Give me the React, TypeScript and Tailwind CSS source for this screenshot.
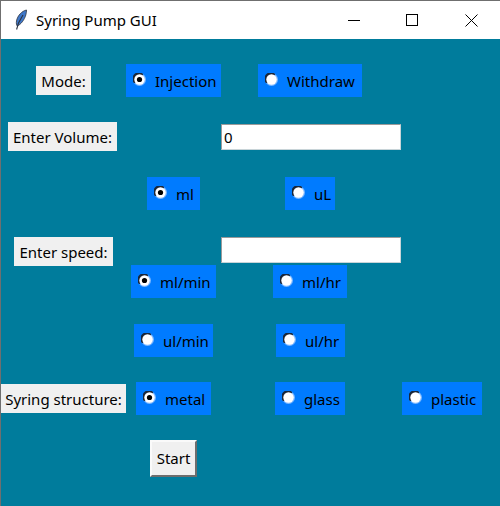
function Label({ text, className }: { text: string; className: string }) {
  return (
    <div className={`flex h-[29px] items-center justify-center bg-[#f0f0f0] text-black ${className}`}>
      <span className="translate-y-[1px]">{text}</span>
    </div>
  );
}

function Radio({ text, checked, className }: { text: string; checked?: boolean; className: string }) {
  return (
    <div className={`flex h-[33px] shrink-0 items-center bg-[#007bff] pl-[7px] text-black ${className}`}>
      <svg width="13" height="13" viewBox="0 0 13 13" className="mb-[2px] mr-[9px] shrink-0">
        <circle cx="6.5" cy="6.5" r="6.5" fill="#7db8ff" />
        <path d="M1.2 10.3A6.4 6.4 0 0 1 10.3 1.2L6.5 6.5Z" fill="#1a2638" />
        <circle cx="6.5" cy="6.5" r="5.2" fill="#ffffff" />
        {checked && <circle cx="6.5" cy="6.5" r="2.6" fill="#000000" />}
      </svg>
      <span className="translate-y-[1px] whitespace-nowrap">{text}</span>
    </div>
  );
}

function Field({ value, className }: { value: string; className: string }) {
  return (
    <input
      readOnly
      value={value}
      className={`h-[26px] w-[180px] border border-[#c8d4d8] border-t-[#9a9a9a] border-l-[#9a9a9a] bg-white px-[2px] text-black outline-none ${className}`}
    />
  );
}

export default function App() {
  return (
    <div className="flex h-[506px] w-[500px] flex-col overflow-hidden border-l border-[#6f6f6f] font-['Noto_Sans',sans-serif] text-[15px]">
      <div className="flex h-[39px] shrink-0 items-center border-t border-[#6f6f6f] bg-white text-black">
        <svg width="14" height="22" viewBox="0 0 14 22" className="ml-[13px] mr-[8px]">
          <path d="M12.5 1C8 2 3.5 6.5 2.5 12c-.4 2.5 0 4 .8 5 3.5-1.5 7-6 8.5-11 .4-2 .8-3.8.7-5Z" fill="#3f78c9" stroke="#39414f" strokeWidth="0.9" />
          <path d="M9 6 4.5 14 2.6 20.5" fill="none" stroke="#2b3240" strokeWidth="1.1" />
        </svg>
        <span>Syring Pump GUI</span>
        <div className="ml-auto flex items-center pr-[22px]">
          <svg width="12" height="12" viewBox="0 0 12 12" className="mr-[46px]">
            <path d="M0 6.5h12" stroke="#000" strokeWidth="1" />
          </svg>
          <svg width="12" height="12" viewBox="0 0 12 12" className="mr-[47px]">
            <rect x="0.5" y="0.5" width="11" height="11" fill="none" stroke="#000" strokeWidth="1" />
          </svg>
          <svg width="13" height="13" viewBox="0 0 13 13">
            <path d="M.5.5l12 12M12.5.5l-12 12" stroke="#000" strokeWidth="1" />
          </svg>
        </div>
      </div>
      <div className="flex flex-1 flex-col bg-[#007c9c] pt-[25px]">
        <div className="flex h-[33px] items-center">
          <Label text="Mode:" className="ml-[35px] w-[55px]" />
          <Radio text="Injection" checked className="ml-[35px] w-[95px]" />
          <Radio text="Withdraw" className="ml-[37px] w-[104px]" />
        </div>
        <div className="mt-[25px] flex h-[29px] items-center">
          <Label text="Enter Volume:" className="ml-[7px] w-[109px]" />
          <Field value="0" className="ml-[104px]" />
        </div>
        <div className="mt-[26px] flex h-[33px] items-center">
          <Radio text="ml" checked className="ml-[146px] w-[53px]" />
          <Radio text="uL" className="ml-[85px] w-[50px]" />
        </div>
        <div className="mt-[27px] flex h-[27px] items-start">
          <Label text="Enter speed:" className="ml-[13px] w-[99px]" />
          <Field value="" className="ml-[108px]" />
        </div>
        <div className="flex h-[34px] items-center">
          <Radio text="ml/min" checked className="ml-[130px] w-[85px]" />
          <Radio text="ml/hr" className="ml-[57px] w-[74px]" />
        </div>
        <div className="mt-[26px] flex h-[33px] items-center">
          <Radio text="ul/min" className="ml-[133px] w-[79px]" />
          <Radio text="ul/hr" className="ml-[63px] w-[69px]" />
        </div>
        <div className="mt-[25px] flex h-[33px] items-center">
          <Label text="Syring structure:" className="w-[125px]" />
          <Radio text="metal" checked className="ml-[10px] w-[75px]" />
          <Radio text="glass" className="ml-[64px] w-[70px]" />
          <Radio text="plastic" className="ml-[57px] w-[80px]" />
        </div>
        <div className="mt-[25px] flex">
          <button
            type="button"
            className="ml-[149px] h-[37px] w-[47px] border-2 border-t-[#fafafa] border-l-[#fafafa] border-r-[#6d6d6d] border-b-[#6d6d6d] bg-[#f0f0f0] text-black"
          >
            Start
          </button>
        </div>
      </div>
    </div>
  );
}
